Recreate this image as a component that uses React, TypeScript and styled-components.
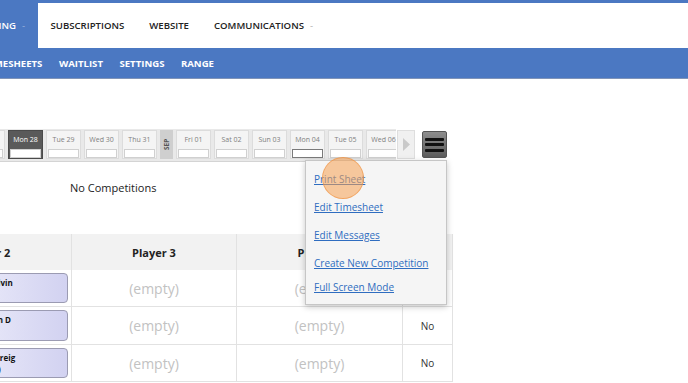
import { Fragment } from "react";
import styled, { createGlobalStyle } from "styled-components";

const GlobalStyle = createGlobalStyle`
  html, body {
    margin: 0;
    padding: 0;
    background: #fff;
    overflow: hidden;
  }
  body {
    width: 688px;
    height: 383px;
    font-family: "Open Sans", "Liberation Sans", sans-serif;
    color: #222;
  }
`;

const Header = styled.header`
  background: #4b78c2;
  padding-top: 3px;
  border-bottom: 1px solid #8094b8;
`;

const MainNav = styled.nav`
  display: flex;
  height: 45px;
`;

const ActiveTab = styled.div`
  display: flex;
  align-items: center;
  width: 67px;
  margin-left: -29px;
  color: #fff;
  font-size: 9.6px;
  font-weight: 600;
  white-space: nowrap;
`;

const NavLinks = styled.div`
  flex: 1;
  display: flex;
  align-items: center;
  background: #fff;
`;

const NavItem = styled.span`
  padding: 0 12.5px;
  font-size: 9.6px;
  font-weight: 600;
  color: #222;
  white-space: nowrap;
`;

const Caret = styled.span<{ $light?: boolean }>`
  margin-left: 6px;
  color: ${(p) => (p.$light ? "#9db3dc" : "#b0b0b0")};
  font-weight: 400;
`;

const SubNav = styled.nav`
  display: flex;
  align-items: center;
  gap: 16.5px;
  height: 30px;
`;

const SubItem = styled.span<{ $first?: boolean }>`
  margin-left: ${(p) => (p.$first ? "-15px" : "0")};
  font-size: 9.6px;
  font-weight: 700;
  color: #fff;
  white-space: nowrap;
`;

const Main = styled.main`
  padding-top: 50px;
`;

const DateBar = styled.div`
  display: flex;
  align-items: flex-start;
  height: 32px;
`;

const DayViewport = styled.div`
  display: flex;
  gap: 3px;
  width: 426px;
  margin-left: -30px;
  padding: 1px 0 2px;
  overflow: hidden;
  background: #e9e9e9;
  border-bottom: 1px solid #d4d4d4;
`;

const DayCell = styled.div<{ $active?: boolean; $today?: boolean }>`
  flex: 0 0 35px;
  height: 29px;
  box-sizing: border-box;
  display: flex;
  flex-direction: column;
  align-items: center;
  padding-top: 4px;
  background: ${(p) => (p.$active ? "#5a5a5a" : "#f4f4f4")};
  border: 1px solid ${(p) => (p.$active ? "#4a4a4a" : "#dcdcdc")};
  color: ${(p) => (p.$active ? "#fff" : "#808080")};
  font-size: 7px;
  line-height: 9px;
  white-space: nowrap;

  span {
    display: block;
    width: 29px;
    height: 8px;
    margin-top: 5px;
    background: #fff;
    border: 1px solid ${(p) => (p.$today ? "#7a7a7a" : "#d0d0d0")};
  }
`;

const MonthCell = styled.div`
  flex: 0 0 13px;
  height: 29px;
  display: flex;
  align-items: center;
  justify-content: center;
  background: #cfcfcf;
  color: #555;
  font-size: 6.5px;
  font-weight: 700;
  writing-mode: vertical-rl;
  transform: rotate(180deg);
`;

const ArrowButton = styled.div`
  width: 18px;
  height: 29px;
  margin-top: 1px;
  margin-left: 1px;
  box-sizing: border-box;
  display: flex;
  align-items: center;
  justify-content: center;
  background: #f0f0f0;
  border: 1px solid #dedede;
`;

const MenuWrap = styled.div`
  position: relative;
  margin-left: 7px;
`;

const Hamburger = styled.div`
  width: 25px;
  height: 27px;
  margin-top: 2px;
  box-sizing: border-box;
  display: flex;
  flex-direction: column;
  align-items: center;
  justify-content: center;
  gap: 2.5px;
  background: linear-gradient(#8d8d8d, #5c5c5c);
  border: 1px solid #555;
  border-radius: 2px;

  i {
    display: block;
    width: 19px;
    height: 3px;
    border-radius: 1px;
    background: #111;
  }
`;

const Dropdown = styled.div`
  position: absolute;
  top: 31px;
  right: 0;
  width: 142px;
  height: 145px;
  box-sizing: border-box;
  padding: 10px 0 0 8px;
  display: flex;
  flex-direction: column;
  background: #f5f5f5;
  border: 1px solid #c6c6c6;
  box-shadow: 0 2px 6px rgba(0, 0, 0, 0.22);
  z-index: 5;
`;

const MenuLink = styled.a<{ $tight?: boolean }>`
  display: block;
  height: 16px;
  line-height: 16px;
  margin-top: ${(p) => (p.$tight ? "8px" : "12px")};
  font-size: 10px;
  color: #2f6dc0;
  text-decoration: underline;
  white-space: nowrap;

  &:first-of-type {
    margin-top: 0;
  }
`;

const Highlight = styled.div`
  position: absolute;
  left: 16px;
  top: -4px;
  width: 42px;
  height: 42px;
  box-sizing: border-box;
  border-radius: 50%;
  background: rgba(246, 160, 82, 0.55);
  border: 1.5px solid rgba(238, 142, 58, 0.6);
`;

const Empty = styled.div`
  height: 73px;
  box-sizing: border-box;
  padding: 19px 0 0 70px;
  font-size: 11px;
  line-height: 16px;
`;

const Grid = styled.div`
  display: grid;
  grid-template-columns: 166px 165px 166px 50px;
  grid-template-rows: 36px 37px 38px 37px;
  margin-left: -94px;
  width: 547px;
`;

const HeadCell = styled.div`
  display: flex;
  align-items: center;
  justify-content: center;
  background: #f2f2f2;
  border-right: 1px solid #e2e2e2;
  font-size: 11px;
  font-weight: 700;
`;

const Cell = styled.div`
  display: flex;
  align-items: center;
  justify-content: center;
  border-right: 1px solid #e2e2e2;
  border-bottom: 1px solid #e2e2e2;
  box-sizing: border-box;
  font-size: 10px;
  color: #333;
`;

const PlayerCell = styled(Cell)`
  justify-content: flex-end;
  align-items: stretch;
  padding: 3px 3px 3px 0;
`;

const Card = styled.div`
  width: 120px;
  box-sizing: border-box;
  padding: 3px 5px;
  background: linear-gradient(to right, #f0f0fb, #d2d2f1);
  border: 1px solid #9b9bb2;
  border-radius: 4px;
  font-size: 8px;
  font-weight: 700;
  line-height: 11px;
  color: #111;
  white-space: nowrap;
`;

const Placeholder = styled.span`
  font-size: 14px;
  color: #c2c2c2;
`;

const days = [
  { label: "Sun 27" },
  { label: "Mon 28", active: true },
  { label: "Tue 29" },
  { label: "Wed 30" },
  { label: "Thu 31" },
  { month: "SEP" },
  { label: "Fri 01" },
  { label: "Sat 02" },
  { label: "Sun 03" },
  { label: "Mon 04", today: true },
  { label: "Tue 05" },
  { label: "Wed 06" },
];

const rows = [
  { name: "Michael Galvin", sub: "(5)" },
  { name: "Kevin Quinn D", sub: "(8)" },
  { name: "Alasdhair Greig", sub: "(Guest 12.4)" },
];

export default function App() {
  return (
    <>
      <GlobalStyle />
      <Header>
        <MainNav>
          <ActiveTab>
            BOOKING<Caret $light>-</Caret>
          </ActiveTab>
          <NavLinks>
            <NavItem>SUBSCRIPTIONS</NavItem>
            <NavItem>WEBSITE</NavItem>
            <NavItem>
              COMMUNICATIONS<Caret>-</Caret>
            </NavItem>
          </NavLinks>
        </MainNav>
        <SubNav>
          <SubItem $first>TIMESHEETS</SubItem>
          <SubItem>WAITLIST</SubItem>
          <SubItem>SETTINGS</SubItem>
          <SubItem>RANGE</SubItem>
        </SubNav>
      </Header>
      <Main>
        <DateBar>
          <DayViewport>
            {days.map((d, i) =>
              d.month ? (
                <MonthCell key={i}>{d.month}</MonthCell>
              ) : (
                <DayCell key={i} $active={d.active} $today={d.today}>
                  {d.label}
                  <span />
                </DayCell>
              )
            )}
          </DayViewport>
          <ArrowButton>
            <svg width="9" height="15" viewBox="0 0 9 15">
              <path d="M1 1 L8 7.5 L1 14 Z" fill="#c9c9c9" />
            </svg>
          </ArrowButton>
          <MenuWrap>
            <Hamburger>
              <i />
              <i />
              <i />
            </Hamburger>
            <Dropdown>
              <MenuLink>Print Sheet</MenuLink>
              <MenuLink>Edit Timesheet</MenuLink>
              <MenuLink>Edit Messages</MenuLink>
              <MenuLink>Create New Competition</MenuLink>
              <MenuLink $tight>Full Screen Mode</MenuLink>
              <Highlight />
            </Dropdown>
          </MenuWrap>
        </DateBar>
        <Empty>No Competitions</Empty>
        <Grid>
          <HeadCell>Player 2</HeadCell>
          <HeadCell>Player 3</HeadCell>
          <HeadCell>Player 4</HeadCell>
          <HeadCell>Paid</HeadCell>
          {rows.map((r) => (
            <Fragment key={r.name}>
              <PlayerCell>
                <Card>
                  {r.name}
                  <br />
                  {r.sub}
                </Card>
              </PlayerCell>
              <Cell>
                <Placeholder>(empty)</Placeholder>
              </Cell>
              <Cell>
                <Placeholder>(empty)</Placeholder>
              </Cell>
              <Cell>No</Cell>
            </Fragment>
          ))}
        </Grid>
      </Main>
    </>
  );
}
